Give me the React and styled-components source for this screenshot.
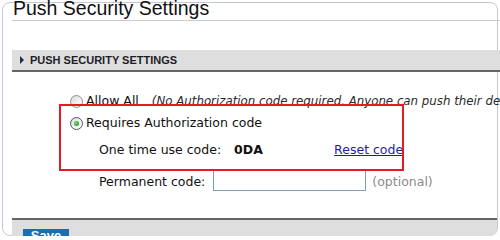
import React from 'react';
import styled, { createGlobalStyle } from 'styled-components';

const GlobalStyle = createGlobalStyle`
  html, body {
    margin: 0;
    padding: 0;
    background: #fff;
    overflow: hidden;
  }
  body {
    font-family: "DejaVu Sans", Verdana, sans-serif;
    font-size: 12.5px;
    color: #111;
  }
`;

const App = () => {
  return (
    <>
      <GlobalStyle />
      <Panel>
        <Title>Push Security Settings</Title>
        <SectionBar>
          <Arrow />
          <SectionTitle>PUSH SECURITY SETTINGS</SectionTitle>
        </SectionBar>
        <Options>
          <OptionRow>
            <Radio />
            <OptionLabel>Allow All</OptionLabel>
            <Note>(No Authorization code required. Anyone can push their devices)</Note>
          </OptionRow>
          <OptionRow $gap={6}>
            <Radio $checked />
            <OptionLabel>Requires Authorization code</OptionLabel>
          </OptionRow>
          <FieldRow $gap={11}>
            <FieldLabel>One time use code:</FieldLabel>
            <CodeValue>0DA</CodeValue>
            <ResetLink href="#">Reset code</ResetLink>
          </FieldRow>
          <FieldRow $gap={11}>
            <FieldLabel $top={5}>Permanent code:</FieldLabel>
            <CodeInput type="text" />
            <Optional>(optional)</Optional>
          </FieldRow>
        </Options>
        <Footer>
          <SaveButton>Save</SaveButton>
        </Footer>
        <Highlight />
      </Panel>
    </>
  );
};

const Panel = styled.div`
  position: relative;
  box-sizing: border-box;
  width: 496px;
  height: 234px;
  margin: 2px 0 0 2px;
  padding: 0 0 0 9px;
  border: 1px solid #c6c6d9;
  border-radius: 8px;
  background: #fff;
`;

const Title = styled.h1`
  margin: -5px -3px 0 0;
  padding: 0 0 1px 1px;
  font-family: "Liberation Sans", Arial, sans-serif;
  font-size: 19.5px;
  font-weight: normal;
  line-height: 21px;
  color: #111;
  border-bottom: 1px solid #cbcbcb;
  white-space: nowrap;
`;

const SectionBar = styled.div`
  display: flex;
  align-items: center;
  height: 20px;
  margin: 29px -3px 0 0;
  padding-left: 8px;
  background: #dedede;
  border-bottom: 2px solid #656565;
`;

const Arrow = styled.span`
  width: 0;
  height: 0;
  border-left: 4px solid #1d2d4a;
  border-top: 4px solid transparent;
  border-bottom: 4px solid transparent;
  margin-right: 6px;
`;

const SectionTitle = styled.span`
  font-family: "Liberation Sans", Arial, sans-serif;
  font-size: 11px;
  font-weight: bold;
  line-height: 20px;
  color: #1e1e28;
`;

const Options = styled.div`
  margin: 21px -3px 0 0;
  padding-left: 58px;
  overflow: hidden;
`;

const OptionRow = styled.div`
  display: flex;
  align-items: center;
  height: 16px;
  margin-top: ${(p) => p.$gap || 0}px;
  white-space: nowrap;
`;

const Radio = styled.span`
  position: relative;
  box-sizing: border-box;
  flex: none;
  width: 13px;
  height: 13px;
  margin: 0 3px 0 0;
  border-radius: 50%;
  border: 1px solid ${(p) => (p.$checked ? '#4a5a6a' : '#8f9090')};
  background: linear-gradient(135deg, #d6d6d6 0%, #f4f4f4 60%, #fff 100%);

  &::after {
    content: '';
    display: ${(p) => (p.$checked ? 'block' : 'none')};
    position: absolute;
    left: 3px;
    top: 3px;
    width: 5px;
    height: 5px;
    border-radius: 50%;
    background: radial-gradient(circle at 40% 40%, #7ee07e 0%, #2c9a2c 70%);
  }
`;

const OptionLabel = styled.span`
  line-height: 16px;
  color: #111;
`;

const Note = styled.span`
  margin-left: 13px;
  font-size: 11.8px;
  font-style: italic;
  line-height: 16px;
  color: #2a2a2a;
`;

const FieldRow = styled.div`
  display: flex;
  align-items: flex-start;
  margin-top: ${(p) => p.$gap || 0}px;
  padding-left: 29px;
  white-space: nowrap;
`;

const FieldLabel = styled.span`
  line-height: 16px;
  padding-top: ${(p) => p.$top || 0}px;
  color: #111;
`;

const CodeValue = styled.span`
  width: 100px;
  margin-left: 13px;
  font-weight: bold;
  line-height: 16px;
  color: #111;
`;

const ResetLink = styled.a`
  line-height: 16px;
  color: #1f1f9c;
  text-decoration: underline;
`;

const CodeInput = styled.input`
  box-sizing: border-box;
  width: 153px;
  height: 22px;
  margin: 0 0 0 8px;
  padding: 0 3px;
  border: 1px solid #7f9db9;
  background: #fff;
  font: inherit;
`;

const Optional = styled.span`
  margin-left: 6px;
  padding-top: 5px;
  line-height: 16px;
  color: #8a8a8a;
`;

const Footer = styled.div`
  box-sizing: content-box;
  height: 7px;
  margin-top: 27px;
  padding: 9px 0 0 11px;
  background: #dedede;
  border-top: 2px solid #656565;
  border-bottom-right-radius: 7px;
  overflow: hidden;
`;

const SaveButton = styled.button`
  display: block;
  width: 46px;
  height: 20px;
  margin: 0;
  padding: 0;
  border: none;
  background: #1b6db3;
  color: #fff;
  font-family: "Liberation Sans", Arial, sans-serif;
  font-size: 13px;
  font-weight: bold;
  line-height: 14px;
  text-align: center;
  display: flex;
  align-items: flex-start;
  justify-content: center;
`;

const Highlight = styled.div`
  position: absolute;
  left: 56px;
  top: 101px;
  width: 345px;
  height: 67px;
  box-sizing: border-box;
  border: 2px solid #e31b23;
  pointer-events: none;
`;

export default App;
